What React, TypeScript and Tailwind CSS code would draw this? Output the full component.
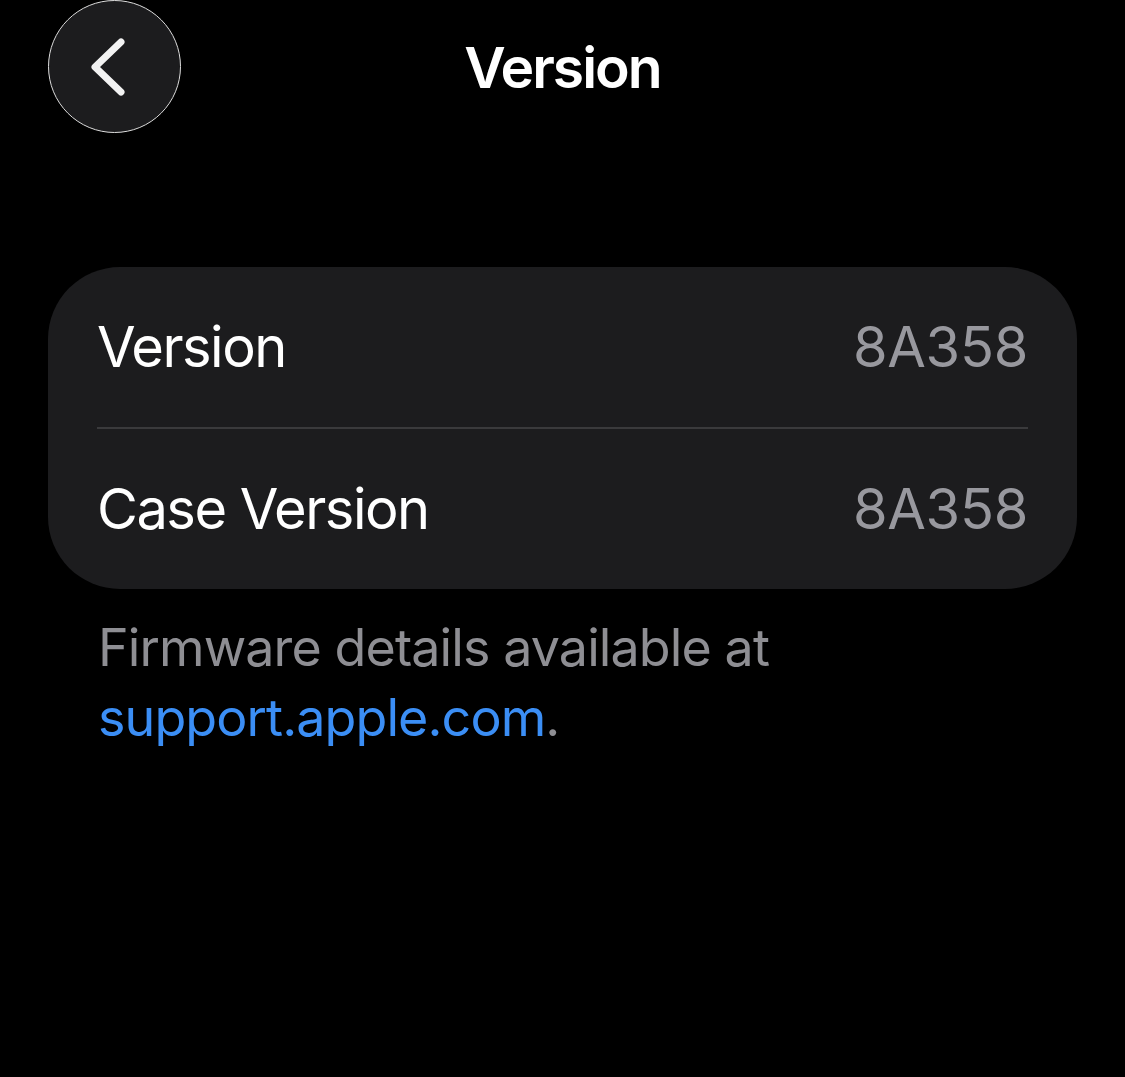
export default function App() {
  const rows = [
    { label: "Version", value: "8A358" },
    { label: "Case Version", value: "8A358" },
  ]

  return (
    <div className="w-[1125px] h-[1077px] bg-black text-white overflow-hidden font-['Inter',sans-serif]">
      {/* Header */}
      <div className="relative h-[134px] flex items-center justify-center">
        <button className="absolute left-[48px] top-0 w-[133px] h-[133px] rounded-full bg-[#1c1c1e] border-[1.5px] border-[#dcdcdc] flex items-center justify-center">
          <svg width="60" height="76" viewBox="0 0 60 76" fill="none">
            <path d="M36 9 L10 34 L36 59" stroke="#f2f2f2" strokeWidth="7" strokeLinecap="round" strokeLinejoin="round" transform="translate(0 4)" />
          </svg>
        </button>
        <h1 className="text-[57px] font-semibold tracking-[-2px] leading-none">Version</h1>
      </div>

      <div className="px-[48px] pt-[133px]">
        {/* Card */}
        <div className="bg-[#1c1c1e] rounded-[72px] px-[49px]">
          {rows.map((row, i) => (
            <div key={row.label}>
              {i > 0 && <div className="h-[2px] bg-[#3a3a3c]" />}
              <div className="h-[160px] flex items-center justify-between text-[56px] leading-none">
                <span className="text-white tracking-[-1.5px]">{row.label}</span>
                <span className="text-[#98989e] tracking-[-0.3px]">{row.value}</span>
              </div>
            </div>
          ))}
        </div>

        {/* Footer */}
        <p className="mt-[24px] px-[50px] text-[52px] leading-[70px] text-[#8e8e93] tracking-[-0.9px]">
          Firmware details available at
          <br />
          <span className="text-[#3b8ef5]">support.apple.com</span>.
        </p>
      </div>
    </div>
  )
}
